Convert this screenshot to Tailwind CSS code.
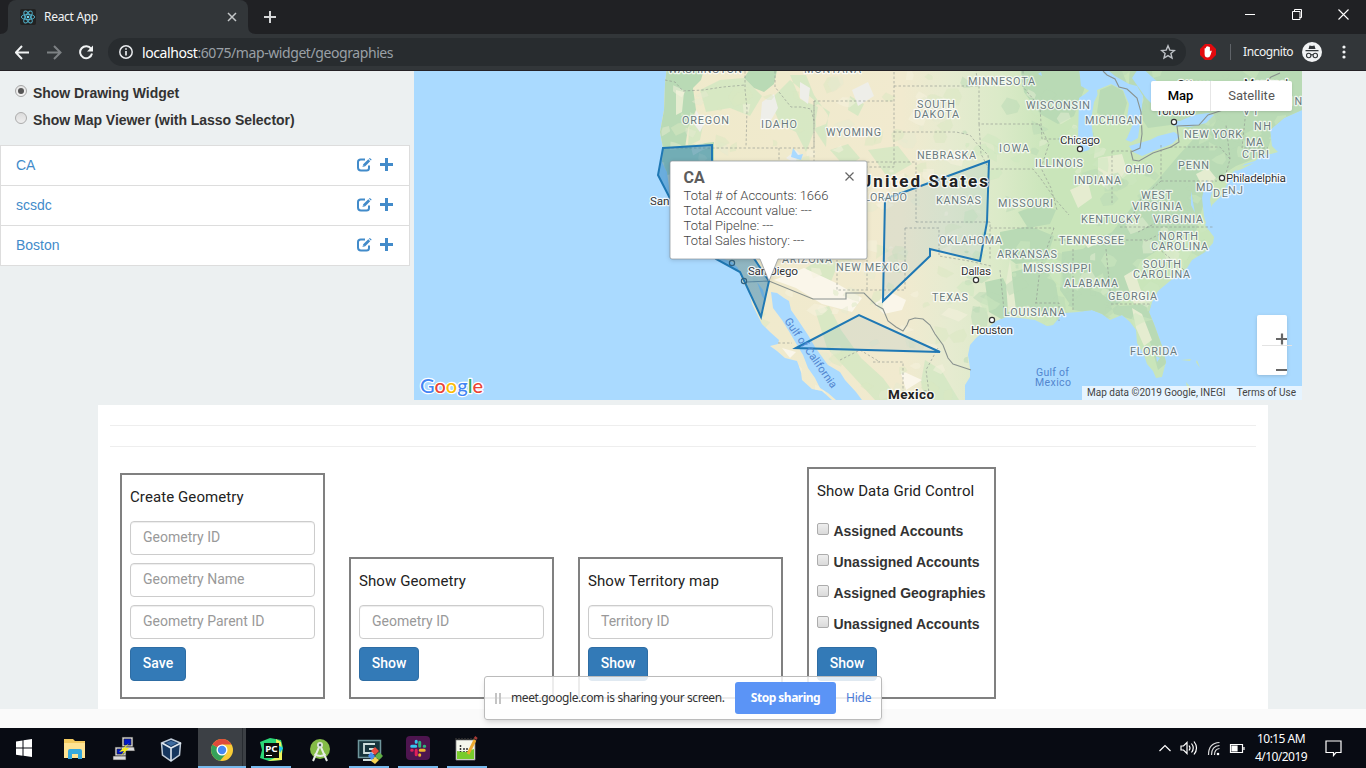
<!DOCTYPE html>
<html lang="en">
<head>
<meta charset="utf-8">
<title>React App</title>
<script src="https://cdn.jsdelivr.net/npm/@tailwindcss/browser@4"></script>
</head>
<body class="w-[1366px] h-[768px] overflow-hidden flex flex-col bg-[#fafafa] font-['Liberation_Sans',sans-serif] text-[14px]">
<!-- tab strip -->
<header class="h-[34px] shrink-0 bg-[#202124] flex font-['Noto_Sans',sans-serif]">
  <div class="relative ml-2 w-[240px] bg-[#323639] rounded-t-lg flex items-center pl-3 pr-[11px]">
    <svg class="absolute -left-2 bottom-0" width="256" height="8"><path d="M0 8Q8 8 8 0V8ZM256 8Q248 8 248 0V8Z" fill="#323639"/></svg>
    <svg width="16" height="16" viewBox="0 0 16 16" fill="none" stroke="#53b5cf"><rect width="16" height="16" rx="2" fill="#222" stroke="none"/><g stroke-width=".9"><ellipse cx="8" cy="8" rx="6.7" ry="2.6"/><ellipse cx="8" cy="8" rx="6.7" ry="2.6" transform="rotate(60 8 8)"/><ellipse cx="8" cy="8" rx="6.7" ry="2.6" transform="rotate(120 8 8)"/></g><circle cx="8" cy="8" r="1.3" fill="#6fd6ee" stroke="none"/></svg>
    <span class="ml-2 text-[12px] tracking-[-0.3px] text-[#f1f3f4] grow">React App</span>
    <svg width="10" height="10" viewBox="0 0 10 10" stroke="#c4c7c9" stroke-width="1.5"><path d="M1 1l8 8M9 1l-8 8"/></svg>
  </div>
  <svg class="ml-4 mt-[11px]" width="12" height="12" stroke="#d5d7d9" stroke-width="2"><path d="M0 6h12M6 0v12"/></svg>
  <div class="ml-auto mr-[17px] mt-[9px] flex gap-[36px]">
    <svg width="11" height="11" stroke="#fff"><path d="M1 5.5h10"/></svg>
    <svg width="11" height="11" fill="none" stroke="#fff"><path d="M1.500 2.5h7.500v8h-7.500zM3.500 2.500v-2h7v8h-2"/></svg>
    <svg width="11" height="11" stroke="#fff" stroke-width="1.100"><path d="M.5 .5l10 10M10.500 .5l-10 10"/></svg>
  </div>
</header>
<!-- toolbar -->
<div class="h-[37px] shrink-0 bg-[#323639] border-b border-[#242126] flex items-center font-['Noto_Sans',sans-serif]">
  <div class="flex items-center w-[108px] pl-[15px] gap-[17px]">
    <svg width="15" height="15" fill="none" stroke="#f1f3f4" stroke-width="2"><path d="M14 7.500h-13M7 1L.8 7.500l6.200 6.500"/></svg>
    <svg width="15" height="15" fill="none" stroke="#7d8184" stroke-width="2"><path d="M0 7.500h13M7 1l6.500 6.500-6.500 6.500"/></svg>
    <svg width="15" height="15" fill="none" stroke="#f1f3f4" stroke-width="2"><path d="M12.100 3.800A6 6 0 1 0 13 8.500"/><path d="M14 .5v6h-6z" fill="#f1f3f4" stroke="none"/></svg>
  </div>
  <div class="w-[1078px] h-7 rounded-full bg-[#282c2f] flex items-center pl-[11px] pr-[10px]">
    <svg width="14" height="14" fill="none" stroke="#e8eaed" stroke-width="1.500"><circle cx="7" cy="7" r="6.200"/><path d="M7 6v4.500M7 3.200v1.600" stroke-width="1.700"/></svg>
    <span class="ml-[9px] text-[14px] tracking-[-0.42px] grow text-[#9aa0a6]"><span class="text-white">localhost</span>:6075/map-widget/geographies</span>
    <svg width="16" height="16" viewBox="0 0 16 16" fill="none" stroke="#bdc1c6" stroke-width="1.400"><path d="M8 1.800l1.800 4.300 4.600.4-3.500 3 1.100 4.500L8 11.600 4 14l1.100-4.500-3.500-3 4.600-.4z"/></svg>
  </div>
  <svg class="ml-[14px]" width="16" height="16"><path d="M5 0h6l5 5v6l-5 5H5l-5-5V5z" fill="#e3090d"/><path d="M4.600 8V4.500q.7-1 1.300 0V3q.7-.9 1.300 0v-.5q.7-.9 1.300 0V3q.8-.8 1.400.2V7.500l1-1q1 0 .8.800L10.500 11q-.8 2.500-2.800 2.500-3.100 0-3.100-3.500z" fill="#fff"/></svg>
  <div class="ml-[14px] w-px h-4 bg-[#5f6368]"></div>
  <span class="ml-[12px] w-[51px] text-[12px] whitespace-nowrap tracking-[-0.42px] text-[#f1f3f4]">Incognito</span>
  <svg class="ml-[8px]" width="20" height="20"><circle cx="10" cy="10" r="10" fill="#f1f3f4"/><path d="M6.500 7l1-3.500 2.500.6 2.500-.6 1 3.500zM3.500 8h13v1.200h-13z" fill="#323639"/><g fill="none" stroke="#323639" stroke-width="1.100"><circle cx="6.700" cy="13.500" r="2.200"/><circle cx="13.300" cy="13.500" r="2.200"/><path d="M9 13q1-.7 2 0"/></g></svg>
  <svg class="ml-[20px]" width="4" height="14" fill="#f1f3f4"><circle cx="2" cy="2" r="1.600"/><circle cx="2" cy="7" r="1.600"/><circle cx="2" cy="12" r="1.600"/></svg>
</div>

<main class="h-[638px] shrink-0 bg-[#ecf0f1] flex flex-col">
  <div class="flex h-[334px]">
    <aside class="w-[414px] pr-1">
      <div class="pl-[15px] pt-[12px] font-bold text-[#333] h-[74px]">
        <div class="flex items-center h-5 gap-[6px] tracking-[-0.04px]"><span class="relative -top-[2px] w-3 h-3 rounded-full border border-[#a5a5a5] bg-gradient-to-b from-[#e5e5e5] to-[#f4f4f4] flex items-center justify-center"><span class="w-[6px] h-[6px] rounded-full bg-[#555]"></span></span>Show Drawing Widget</div>
        <div class="flex items-center h-5 mt-[7px] gap-[6px] tracking-[-0.03px]"><span class="relative -top-[2px] w-3 h-3 rounded-full border border-[#acacac] bg-gradient-to-b from-[#dcdcdc] to-[#eee]"></span>Show Map Viewer (with Lasso Selector)</div>
      </div>
      <svg width="0" height="0" class="absolute"><defs>
        <g id="edit"><path d="M8 1.500H3.800Q1 1.500 1 4v5.500Q1 12.500 4 12.500h5.500Q12 12.500 12 10V7.500" fill="none" stroke="#428bca" stroke-width="2"/><path d="M5.500 9l.7-2.700L11.300 1.300l1.900 1.900L8.200 8.300zM12 .7l.8-.8 1.900 1.900-.8.8z" fill="#428bca"/><path d="M6.400 8.200l1-.2-.7-.8z" fill="#fff"/></g>
        <path id="plus" d="M5 0h3v5h5v3H8v5H5V8H0V5h5z" fill="#428bca"/>
      </defs></svg>
      <ul class="w-[410px] border border-[#ddd] bg-white divide-y divide-[#ddd] text-[#428bca]">
        <li class="h-10 flex items-center pl-[15px] pr-[16px]"><span class="grow">CA</span><svg width="15" height="14" class="mr-[8px] mb-[2px]"><use href="#edit"/></svg><svg width="13" height="13" class="mb-[2px]"><use href="#plus"/></svg></li>
        <li class="h-10 flex items-center pl-[15px] pr-[16px]"><span class="grow">scsdc</span><svg width="15" height="14" class="mr-[8px] mb-[2px]"><use href="#edit"/></svg><svg width="13" height="13" class="mb-[2px]"><use href="#plus"/></svg></li>
        <li class="h-[39px] flex items-center pl-[15px] pr-[16px]"><span class="grow">Boston</span><svg width="15" height="14" class="mr-[8px] mb-[2px]"><use href="#edit"/></svg><svg width="13" height="13" class="mb-[2px]"><use href="#plus"/></svg></li>
      </ul>
    </aside>

    <section class="relative w-[888px] h-[329px] overflow-hidden bg-[#aadaff] font-['Roboto',sans-serif]">
      <svg width="888" height="329" viewBox="414 71 888 329" class="block">
        <defs>
          <linearGradient id="base" gradientUnits="userSpaceOnUse" x1="660" y1="0" x2="1050" y2="0"><stop offset="0" stop-color="#efeacb"/><stop offset=".62" stop-color="#f1eacf"/><stop offset=".74" stop-color="#e6ebd0"/><stop offset=".87" stop-color="#dbeac8"/><stop offset="1" stop-color="#c9e5ba"/></linearGradient>
          <path id="landShape" d="M667 66L665 84L664 110L660 132L663 148L662 162L667 172L670 195L680 220L700 245L716 256L732 262L738 268L742 281L749 292L752 304L758 316L762 324L770 332L779 340L778 344L770 346L777 351L785 358L797 361L801 372L802 380L812 389L822 391L832 400H836L828 393L820 388L815 378L808 368L803 355L797 345L790 333L782 320L773 308L771 292L777 293L784 298L789 301L791 310L798 320L808 335L815 347L828 365L840 372L845 380L856 392L862 400H965L965 385L970 377L970 368L968 355L970 345L976 338L982 333L996 321L1006 317L1020 318L1035 320L1047 326L1053 325L1059 318L1056 314L1065 313L1078 312L1092 310L1102 314L1110 320L1122 315L1130 322L1136 330L1137 343L1144 355L1147 364L1153 371L1156 378L1162 377L1166 362L1162 346L1158 335L1154 324L1149 312L1152 302L1158 291L1170 281L1187 268L1192 260L1205 252L1213 243L1214 237L1205 225L1212 205L1222 195L1229 180L1233 172L1245 164L1255 161L1262 155L1271 154L1278 152L1272 146L1270 130L1284 118L1302 110V66z"/>
          <clipPath id="land"><use href="#landShape"/></clipPath>
        </defs>
        <rect x="414" y="71" width="888" height="329" fill="#aadaff"/>
        <use href="#landShape" fill="url(#base)"/>
        <g clip-path="url(#land)">
          <!-- forest and lowland areas -->
          <g fill="#b9dab5">
            <path d="M655 66h50l-4 14-8 8 3 22-8 18-3 20-5 22-22-10zM752 66h26l-4 18-10 8-10-4-10-10zM664 148l50-6 0 20-50 14z"/>
            <path d="M1020 66h70l-6 24-10 26-16 8-18-10-16-22zM1100 66h20l8 20 8 22-16 6-8-20zM1130 66h172v50l-30 20-6 18-30 12-22 14-10 22-8 30-26 10-30 20-20 40-22 10-30-6 14-24-14-16 18-20 26-14 24-30 20-20 22-26 20-22-20-10-30 4-20-30z"/>
            <path d="M1000 232l30-6 24 10-8 24-30 4-16-12zM1012 272l30-8 14 20 4 26-30 2-20-8zM1062 252l40-6 40 10-14 40-24 20-30-6-14-20zM1150 304l-30 2-12-8 6 16 20 6 16 22 8 28 10-8zM985 282l18-4 14 30-14 12-14-8z"/>
            <path d="M1018 212l22-8 16 6-6 14-22 4zM1130 220l40-16 30 0-20 30-36 22-20-6z"/>
          </g>
          <g fill="#cfe7c0">
            <path d="M700 90l20-10 24-2 18 18-12 20-20-8-24 4zM770 100l20-20 24 20 2 26-10 26-10-20-16-8zM790 75l10 24 18 8-4 22 12 18 2-32-14-20-8-20zM690 112l14 8-4 20-12 6zM802 116l16-12 12 8-4 12-16 6zM850 96l14 8-6 12-10-6zM830 150l18-6 12 14-14 10z" opacity=".75"/>
            <path d="M815 310l14-4 12 24 20 28 22 20 16 22h-24l-22-24-26-28zM925 360l16 10 18 30h-34l-4-18zM806 268l18-12 14 8-8 20-18 2zM868 150l30-4 14 18-24 14z" opacity=".7"/>
          </g>
          <g fill="#e5ecd0"><path d="M1098 158l24-4 6 20-20 16-10-8zM1070 190l18-8 4 16-14 10zM1124 276l10-6 6 18 6 14-12 2zM1132 308l10 6 10 26-8 6-8-18zM1010 260l6 50-8 2-2-30zM1196 174l12-6 8 10-12 12zM1080 238l20 4-12 6zM676 90l8 2-2 20-6 3z"/></g>
          <g fill="#faf6ea"><path d="M774 280l30-12 30 14 28 16-10 14-30-8-26-16zM874 304l16-12 16 8-4 10-18 4zM782 348l14 4-6 6zM900 370l22 10-16 10z"/></g>
          <g fill="#eeeee9"><path d="M762 102l12-8 4 14-8 14-10 4zM852 90l16-8 6 14-16 10zM696 110l8 14-4 8-6-8zM800 82l10 6-2 16-8-6zM786 158l10-8 6 6-6 8z"/></g>
          <g id="patches"></g>
        </g>
        <!-- lakes and bays -->
        <g fill="#aadaff">
          <path d="M1079 98l6-4 10-8 8-2-5 10-4 8-3 18 2 16-4 14-7 2-4-14zM1103 66l12 10 14 8 8 2 6 10-2 20-3 22-7 4-10-4-4-6 6-14-8-20-20-4-14-8-2-18zM1140 66l22 20-6 22-10-10-14-20zM1129 146l7-2 14-4 8-4 16-4 6 4-8 8-16 6-14 6-9-4zM1172 121l8 0 14-6 14-2 6 2-8 8-16 4-16-1zM1210 98l-2-12 2-6 4 20zM791 157l2-9 5 7 5-1-2 6zM757 282l6 8 3 12-4-6zM1206 180l7 8-3 12 4 22-6 8-4-14-2-18zM1191 191l4 22-4-8zM1156 356l4 2-3 4zM1038 74l3-2 1 4z"/>
        </g>
        <g fill="#c9e5ba"><path d="M1097 90l14-6 12 6 6 14-2 14 6 6-6 14-6 8-22 2-5-12 0-20 4-18z"/><path d="M1238 167l16-4-12 6-6 2zM1181 360l10-1-1 2zM1197 360l3 8-4-6zM1186 382l6 7-4 4z"/></g>
        <path d="M1100 90l12-5 11 6 4 12-4 14-14 2-12-6z" fill="#b9dab5"/>
        <!-- state borders -->
        <g fill="none" stroke="#8f9690" stroke-opacity=".62" stroke-dasharray="2.500 2">
          <path d="M665 80l10 2 8 9 20-1 20-3 22-2M745 71v18l2 20-1 38M667 148h147v-47h80M775 71v16l8 10 8 10 10 0 10 2 3 12M779 148v12M814 101v66h80v-96M894 86h84l-2-15M894 132h62l14 3 8 10 10 10 1 13M979 86v38h60M979 124l2 30 8 15h44l8 10 14 20 14 16M1023 71v16l17 20 2 32h34M1039 124l10 20-8 24 10 20 6 22M867 162h49v60M916 222h74v38M905 228h34v28l30 5 22 5M905 228v62h-68v-64M990 228h64M1000 270l4 40M1054 228l-14 40-4 35M1054 240h92M1073 249v62M1106 249l5 52M1111 304h40M1035 303h24v18M1112 151v52M1112 151h22M1161 145v36h56M1161 181l-20 18-10 20M1170 147h50l10 12M1224 181l6-22-4-34M1246 110l-4 38h26M1120 227h94M1138 232l30-15 30 3M1164 232l-20 10M1158 248l26 22M778 343h14M867 260v30M930 400l-4-30 12-22M873 362h30v34l26-6M840 360l20-10 20 12M836 170v90"/>
        </g>
        <g fill="none" stroke="#89928f" stroke-width="1.100"><path d="M746 282L769 281L813 299H846V293H864L876 305L883 309L888 321L896 327L903 331L907 325L909 320L915 318L923 319L930 325L935 334L943 345L948 358L953 364L962 367L971 370M1103 71l4 4 8 4 4 8 8 2 10 9 4 14 1 22-2 14-9 4 2 8 6 1 14-8 18-6 8-5-2-16 22-1 9-10 30-10 10-14 14-4 9-10 9-4"/></g>
        <!-- territories -->
        <g fill="#1f78b4" fill-opacity=".08" stroke="#1f78b4" stroke-width="2"><path d="M885 199l104-38-2 61-7 39-50-12 0 7-47 45zM796 348l63-33 81 37z"/><path d="M663 148l49-3v50l57 86-8 36-21-45-24-13-38-45-20-39z" fill-opacity=".46"/></g>
        <g id="stateLabels" font-size="10.800" fill="#6b7b7e" stroke="#fff" stroke-opacity=".75" stroke-width="2.500" paint-order="stroke" stroke-linejoin="round"></g>
        <g id="cityLabels" font-size="11.800" fill="#303234" stroke="#fff" stroke-opacity=".85" stroke-width="2.500" paint-order="stroke" stroke-linejoin="round"></g>
        <g fill="#fff" stroke="#333" stroke-width="1.200"><circle cx="1080" cy="149" r="2.600"/><circle cx="1174" cy="122" r="2.600"/><circle cx="1222" cy="178" r="2.600"/><circle cx="976" cy="280" r="2.600"/><circle cx="992" cy="320" r="2.600"/><g fill="none" stroke="#31617e"><circle cx="732" cy="263" r="2.600"/><circle cx="744" cy="281" r="2.600"/></g></g>
        <g font-size="10.500" fill="#5286cf"><text x="1036" y="375.500" textLength="33">Gulf of</text><text x="1035" y="386" textLength="36">Mexico</text><text transform="translate(784 321) rotate(55)" textLength="83" font-size="11">Gulf of California</text></g>
        <g fill="#222" stroke="#fff" stroke-opacity=".8" stroke-width="2.500" paint-order="stroke" font-weight="700"><text x="860" y="187" font-size="17" textLength="128">United States</text><text x="888" y="399" font-size="13.500" textLength="46">Mexico</text></g>
        <!-- wordmark -->
        <g font-family="Lato,sans-serif" font-size="20" font-weight="500" stroke="#fff" stroke-width="2.500" paint-order="stroke" stroke-linejoin="round"><text x="420" y="392.500" textLength="63" lengthAdjust="spacingAndGlyphs"><tspan fill="#4285f4">G</tspan><tspan fill="#ea4335">o</tspan><tspan fill="#fbbc05">o</tspan><tspan fill="#4285f4">g</tspan><tspan fill="#34a853">l</tspan><tspan fill="#ea4335">e</tspan></text></g>
        <!-- info window -->
        <path d="M672 161h193q2 0 2 2v94q0 2-2 2h-87l-9 22-9-22h-88q-2 0-2-2v-94q0-2 2-2z" fill="#fff" stroke="#8a9299" stroke-opacity=".7" class="drop-shadow-sm"/>
      </svg>
      <div class="absolute left-[269.600px] top-[97px] text-[13px] leading-[15px] font-light text-[#444] tracking-[-0.04px] whitespace-nowrap">
        <div class="text-[16px] leading-[20px] font-bold text-[#5d5d5d] tracking-normal">CA</div>
        <div>Total # of Accounts: 1666</div><div>Total Account value: ---</div><div>Total Pipelne: ---</div><div>Total Sales history: ---</div>
      </div>
      <svg class="absolute left-[431px] top-[101px]" width="9" height="9" stroke="#666" stroke-width="1.200"><path d="M.5 .5l8 8M8.500 .5l-8 8"/></svg>
      <div class="absolute left-[737px] top-[10px] w-[141px] h-[30px] bg-white rounded-[2px] shadow flex items-center text-[13px]"><span class="w-[60px] text-center font-medium text-black border-r border-[#e6e6e6] leading-[30px]">Map</span><span class="grow text-center text-[#565656]">Satellite</span></div>
      <svg class="absolute left-[839px] top-[241px]" width="50" height="70"><rect x="4" y="3" width="30" height="60" rx="2" fill="#fff" class="drop-shadow"/><path d="M9 33.500h30" stroke="#e3e3e3"/><path d="M23 27h11M29 21.500v11M23 58h11" stroke="#666" stroke-width="2.200"/></svg>
      <div class="absolute right-0 bottom-0 h-[14px] w-[220px] bg-white/70 text-[10px] leading-[14px] text-[#444] flex justify-between pl-[5px] pr-[6px] whitespace-nowrap"><span>Map data ©2019 Google, INEGI</span><span>Terms of Use</span></div>
    </section>
  </div>

  <section class="w-[1170px] h-[304px] mx-auto bg-white px-3 font-['Roboto',sans-serif]">
    <hr class="mt-5 border-[#eee]"><hr class="mt-5 border-[#eee]">
    <div class="h-[252px] flex items-end gap-6 pl-[10px] text-[#333]">
      <div class="w-[205px] h-[226px] border-2 border-[#808080] px-2 flex flex-col items-start">
        <h4 class="text-[15px] leading-[20px] tracking-[0.09px] text-[#222] mt-[12px] mb-[14px]">Create Geometry</h4>
        <div class="w-full flex flex-col gap-2 mb-2 text-[#999]"><div class="h-[34px] border border-[#ccc] rounded px-3 leading-[31px] shadow-[inset_0_1px_1px_rgba(0,0,0,0.075)]">Geometry ID</div><div class="h-[34px] border border-[#ccc] rounded px-3 leading-[31px] shadow-[inset_0_1px_1px_rgba(0,0,0,0.075)]">Geometry Name</div><div class="h-[34px] border border-[#ccc] rounded px-3 leading-[31px] shadow-[inset_0_1px_1px_rgba(0,0,0,0.075)]">Geometry Parent ID</div></div>
        <button class="w-[56px] h-[34px] rounded bg-[#337ab7] border border-[#2e6da4] text-white font-medium leading-[30px] pb-[2px]">Save</button>
      </div>
      <div class="w-[205px] h-[142px] border-2 border-[#808080] px-2 flex flex-col items-start">
        <h4 class="text-[15px] leading-[20px] tracking-[0.09px] text-[#222] mt-[12px] mb-[14px]">Show Geometry</h4>
        <div class="w-full h-[34px] shrink-0 mb-2 border border-[#ccc] rounded px-3 leading-[31px] text-[#999] shadow-[inset_0_1px_1px_rgba(0,0,0,0.075)]">Geometry ID</div>
        <button class="w-[60px] h-[34px] rounded bg-[#337ab7] border border-[#2e6da4] text-white font-medium leading-[30px] pb-[2px]">Show</button>
      </div>
      <div class="w-[205px] h-[142px] border-2 border-[#808080] px-2 flex flex-col items-start">
        <h4 class="text-[15px] leading-[20px] tracking-[0.09px] text-[#222] mt-[12px] mb-[14px]">Show Territory map</h4>
        <div class="w-full h-[34px] shrink-0 mb-2 border border-[#ccc] rounded px-3 leading-[31px] text-[#999] shadow-[inset_0_1px_1px_rgba(0,0,0,0.075)]">Territory ID</div>
        <button class="w-[60px] h-[34px] rounded bg-[#337ab7] border border-[#2e6da4] text-white font-medium leading-[30px] pb-[2px]">Show</button>
      </div>
      <div class="w-[189px] h-[232px] border-2 border-[#808080] px-2 flex flex-col items-start">
        <h4 class="text-[15px] leading-[20px] tracking-[0.09px] text-[#222] mt-[12px] mb-[20px] whitespace-nowrap">Show Data Grid Control</h4>
        <div class="flex flex-col gap-[11px] mb-[13px] font-['Liberation_Sans',sans-serif] font-bold leading-5 whitespace-nowrap text-[#333] tracking-[-0.02px]">
          <label class="flex gap-[4.500px]"><span class="w-3 h-3 mt-[2px] rounded-[2px] border border-[#acacac] bg-gradient-to-b from-[#eee] to-[#dadada]"></span>Assigned Accounts</label>
          <label class="flex gap-[4.500px]"><span class="w-3 h-3 mt-[2px] rounded-[2px] border border-[#acacac] bg-gradient-to-b from-[#eee] to-[#dadada]"></span>Unassigned Accounts</label>
          <label class="flex gap-[4.500px]"><span class="w-3 h-3 mt-[2px] rounded-[2px] border border-[#acacac] bg-gradient-to-b from-[#eee] to-[#dadada]"></span>Assigned Geographies</label>
          <label class="flex gap-[4.500px]"><span class="w-3 h-3 mt-[2px] rounded-[2px] border border-[#acacac] bg-gradient-to-b from-[#eee] to-[#dadada]"></span>Unassigned Accounts</label>
        </div>
        <button class="w-[60px] h-[34px] rounded bg-[#337ab7] border border-[#2e6da4] text-white font-medium leading-[30px] pb-[2px]">Show</button>
      </div>
    </div>
  </section>
</main>

<!-- screen sharing bar -->
<div class="absolute left-[484px] top-[676px] w-[398px] h-[44px] rounded-[3px] border border-[#bbb] bg-white/85 shadow-md flex items-center font-['Noto_Sans',sans-serif] text-[12px] whitespace-nowrap">
  <svg class="ml-[10px]" width="6" height="11" fill="#c4c4c4"><path d="M0 0h2v11H0zM4 0h2v11H4z"/></svg>
  <span class="ml-[10px] w-[214px] text-[#333] tracking-[-0.4px]">meet.google.com is sharing your screen.</span>
  <span class="ml-[10px] w-[101px] h-8 rounded-[3px] bg-[#5b94f6] text-white font-bold text-center leading-8 tracking-[-0.5px]">Stop sharing</span>
  <span class="ml-[10px] text-[#4b7bd8] tracking-[-0.2px]">Hide</span>
</div>

<!-- taskbar -->
<footer class="mt-auto h-10 shrink-0 bg-[#080b13] flex font-['Noto_Sans',sans-serif]">
  <svg width="500" height="40" viewBox="0 728 500 40">
    <path d="M16 741.500l6.500-1v7H16zM23.500 740.300l8.500-1.300v8.500h-8.500zM16 748.500h6.500v7.200l-6.500-1zM23.500 748.500H32v8.500l-8.500-1.200z" fill="#fff"/>
    <path d="M64 739h9l2 2h10v17H64z" fill="#f3ca5f"/><path d="M64 743h21v15H64z" fill="#ffe392"/><path d="M68 759v-8q0-2 2-2h10q2 0 2 2v8h-4v-5h-6v5z" fill="#35a8dd"/>
    <g stroke="#222" stroke-width=".6"><path d="M122 737h11v10h-11zM115 747h11v9h-11z" fill="#ccc"/><path d="M124 739h7v6h-7zM117 749h7v5h-7z" fill="#0018c8"/><path d="M121 747h13l1 4h-13zM113 756h13v4h-13z" fill="#ddd"/></g><path d="M129 743l-10 9 5-1-3 5 8-8-4 0z" fill="#f7ef20"/>
    <path d="M171 739l9.500 4-1 12-8.500 6-8.500-6-1-12z" fill="#16365e" stroke="#bfcbd8" stroke-width="1.500"/><path d="M162 743l9 5 10-5M171 748v13" fill="none" stroke="#e0e8ef" stroke-width="1.600"/><path d="M171 741l6 2-6 3-5-3z" fill="#3d6a9e"/>
    <rect x="198" y="728" width="48" height="38" fill="#3c4045"/><path d="M242.500 728v38" stroke="#282c31"/>
    <circle cx="222" cy="750" r="11" fill="#f8cc37"/><path d="M222 750L212.500 744.500A11 11 0 0 0 220 760.800L226.800 752.700z" fill="#35a25a"/><path d="M222 750l-9.500-5.500A11 11 0 0 1 231.500 744.500H222z" fill="#df4a3b"/><circle cx="222" cy="750" r="5.500" fill="#fff"/><circle cx="222" cy="750" r="4.200" fill="#4688f1"/>
    <path d="M260 742l10-4 11 2 2 8-2 12-12 1-9-3 2-8z" fill="#2bd778"/><path d="M276 739l5 3 1 9 0 9-14 1 9-4z" fill="#edf35c"/><path d="M278 745l5 3-3 5z" fill="#1bc5ef"/><rect x="264" y="743" width="15" height="15" fill="#0b0d0b"/><path d="M266 755.500h6" stroke="#fff"/><text x="265.200" y="751.500" font-size="8.500" font-weight="700" textLength="12.500" lengthAdjust="spacingAndGlyphs" fill="#fff">PC</text>
    <circle cx="320" cy="749" r="10" fill="#84bb47"/><path d="M313 761l7-16 7 16M314.500 754q6 4 11 0" fill="none" stroke="#e7ece6" stroke-width="2"/><circle cx="320" cy="745" r="3" fill="#dce4da"/><circle cx="320" cy="745" r="1.200" fill="#456"/>
    <path d="M358.500 740.500h22v17h-22z" fill="#17343c" stroke="#6f969c" stroke-width="1.500"/><path d="M375 744h-11v9h10v-4h-5M363 760h11" fill="none" stroke="#cfdedd" stroke-width="1.800"/><path d="M375 747l4 4-4 4-4-4z" fill="#e84a3c"/><path d="M371 752l4 4-3 4-4-4z" fill="#4b8eec"/><path d="M379 752l4 4-4 4-4-4z" fill="#5fae43"/><path d="M375 757l4 3-4 4-4-3z" fill="#f5d450"/>
    <rect x="406" y="736" width="24" height="24" rx="4" fill="#4d154f"/><g stroke-width="3" stroke-linecap="round" transform="translate(-.3 -2.300)"><path d="M412 748.500h4M416.500 743.500v1" stroke="#36c5f0"/><path d="M420 744.500v4M424.500 748.500h.5" stroke="#2eb67d"/><path d="M420.500 752.500h4M420 757v.5" stroke="#ecb22e"/><path d="M412 752.500h.5M416.500 752.500v4.500" stroke="#e01e5a"/></g>
    <path d="M456 740h19v20h-19z" fill="#f5f7ee" stroke="#888" stroke-width=".8"/><path d="M457 751l8 1 9-3v10h-17z" fill="#78cc2c"/><path d="M460.500 745v7M464 748v4M467 748v4M455 739h20" stroke="#333" stroke-width="1.500" stroke-dasharray="2 1"/><path d="M475 740l-7 14" stroke="#edaa31" stroke-width="3"/><path d="M475 739l1.500-2" stroke="#a63a35" stroke-width="3"/>
    <path d="M198 766h48v2h-48zM251 766h40v2h-40zM349 766h40v2h-40zM398 766h40v2h-40zM447 766h40v2h-40z" fill="#76b9ed"/>
  </svg>
  <svg class="ml-auto" width="96" height="40" viewBox="1156 728 96 40" fill="none" stroke="#fff" stroke-width="1.200">
    <path d="M1159.500 751l5.500-5.500 5.500 5.500M1181 746h2.500l3.500-3.500v11l-3.500-3.500h-2.500zM1189 745.500q2 2.500 0 5M1191.500 743.500q3.500 4.500 0 9M1194 741.500q5 6.500 0 13"/>
    <path d="M1208.500 755q0-12 11-12.500M1211.500 755q0-9 8-9.500M1214.500 755q0-6 5-6.500" stroke="#ddd"/><circle cx="1218" cy="754" r="1.300" fill="#fff" stroke="none"/><path d="M1230.500 744.500h12v8h-12zM1244 747v3"/><path d="M1232 746h5v5h-5z" fill="#fff"/>
  </svg>
  <div class="w-[58px] text-center text-white text-[12px] leading-[18px] tracking-[-0.55px] pt-[2px] whitespace-nowrap">10:15 AM<br>4/10/2019</div>
  <svg class="ml-[15px] mr-[24px] mt-[12px]" width="17" height="17" fill="none" stroke="#fff" stroke-width="1.200"><path d="M1 1h15v11.500h-5l-2.500 3v-3H1z"/></svg>
</footer>

<script>
const NS = 'http://www.w3.org/2000/svg';
// [text, x, baseline, width]
const states = [['OREGON',682,123.5,46],['IDAHO',761,128,35],['WYOMING',826,136,54],['MINNESOTA',968,85,66],['SOUTH',917,108,37],['DAKOTA',914,118,44],['WISCONSIN',1026,109,63],['NEBRASKA',917,159,58],['IOWA',999,152,29],['ILLINOIS',1035,167,47],['INDIANA',1074,184,46],['COLORADO',849,201,57],['KANSAS',936,204,44],['MISSOURI',998,207,54],['KENTUCKY',1081,223,58],['VIRGINIA',1153,223,49],['WEST',1141,199,30],['VIRGINIA',1132,210,49],['OHIO',1125,173,27],['PENN',1178,169,30],['NEW YORK',1184,138,57],['NH',1254,130,16],['MA',1246,146,16],['CT',1242,158,14],['RI',1258,158,10],['MD',1196,191,16],['DE',1213,197,14],['NJ',1228,194,14],['VT',1243,115,15],['MAINE',1267,105,43],['MICHIGAN',1085,124,56],['OKLAHOMA',939,244,62],['TENNESSEE',1059,244,64],['ARKANSAS',997,258,59],['NORTH',1159,240,38],['CAROLINA',1151,250,56],['SOUTH',1143,268,37],['CAROLINA',1133,278,56],['MISSISSIPPI',1023,272,67],['ALABAMA',1064,287,53],['GEORGIA',1108,300,48],['LOUISIANA',1004,316,60],['TEXAS',932,301,35],['NEW MEXICO',836,271,71],['ARIZONA',782,263,49],['FLORIDA',1130,355,46],['MONTANA',804,73,56],['WASHINGTON',668,73,73]];
const cities = [['Chicago',1060,144,40],['Toronto',1156,115,39],['Ottawa',1177,88,38],['Montreal',1244,87,44],['Philadelphia',1226,182,60],['San Francisco',650,205,71],['San Diego',748,275,50],['Dallas',961,275,30],['Houston',971,334,42]];
function put(id, list) {
  const g = document.getElementById(id);
  for (const [s, x, y, w] of list) {
    const t = document.createElementNS(NS, 'text');
    t.setAttribute('x', x); t.setAttribute('y', y); t.setAttribute('textLength', w + (id === 'stateLabels' ? 1 : 0));
    t.textContent = s; g.appendChild(t);
  }
}
put('stateLabels', states); put('cityLabels', cities);
// small terrain patches from a fixed seed
let seed = 7;
const rnd = () => (seed = (seed * 16807) % 2147483647) / 2147483647;
const g = document.getElementById('patches');
for (let i = 0; i < 420; i++) {
  const x = 660 + rnd() * 640, y = 71 + rnd() * 329, r = 2 + rnd() * 7, n = 6;
  let d = '';
  for (let k = 0; k < n; k++) {
    const a = k / n * 6.283, q = r * (0.4 + rnd());
    d += (k ? 'L' : 'M') + (x + Math.cos(a) * q * 1.2).toFixed(1) + ' ' + (y + Math.sin(a) * q).toFixed(1);
  }
  const p = document.createElementNS(NS, 'path');
  const west = x < 960, u = rnd();
  p.setAttribute('d', d + 'z');
  p.setAttribute('fill', west ? (u < .4 ? '#d9e8c2' : u < .75 ? '#f6f1de' : '#e6ead0') : (u < .45 ? '#b9dab5' : u < .9 ? '#cde8bf' : '#e6edd4'));
  p.setAttribute('opacity', '.5');
  g.appendChild(p);
}
</script>
</body>
</html>
